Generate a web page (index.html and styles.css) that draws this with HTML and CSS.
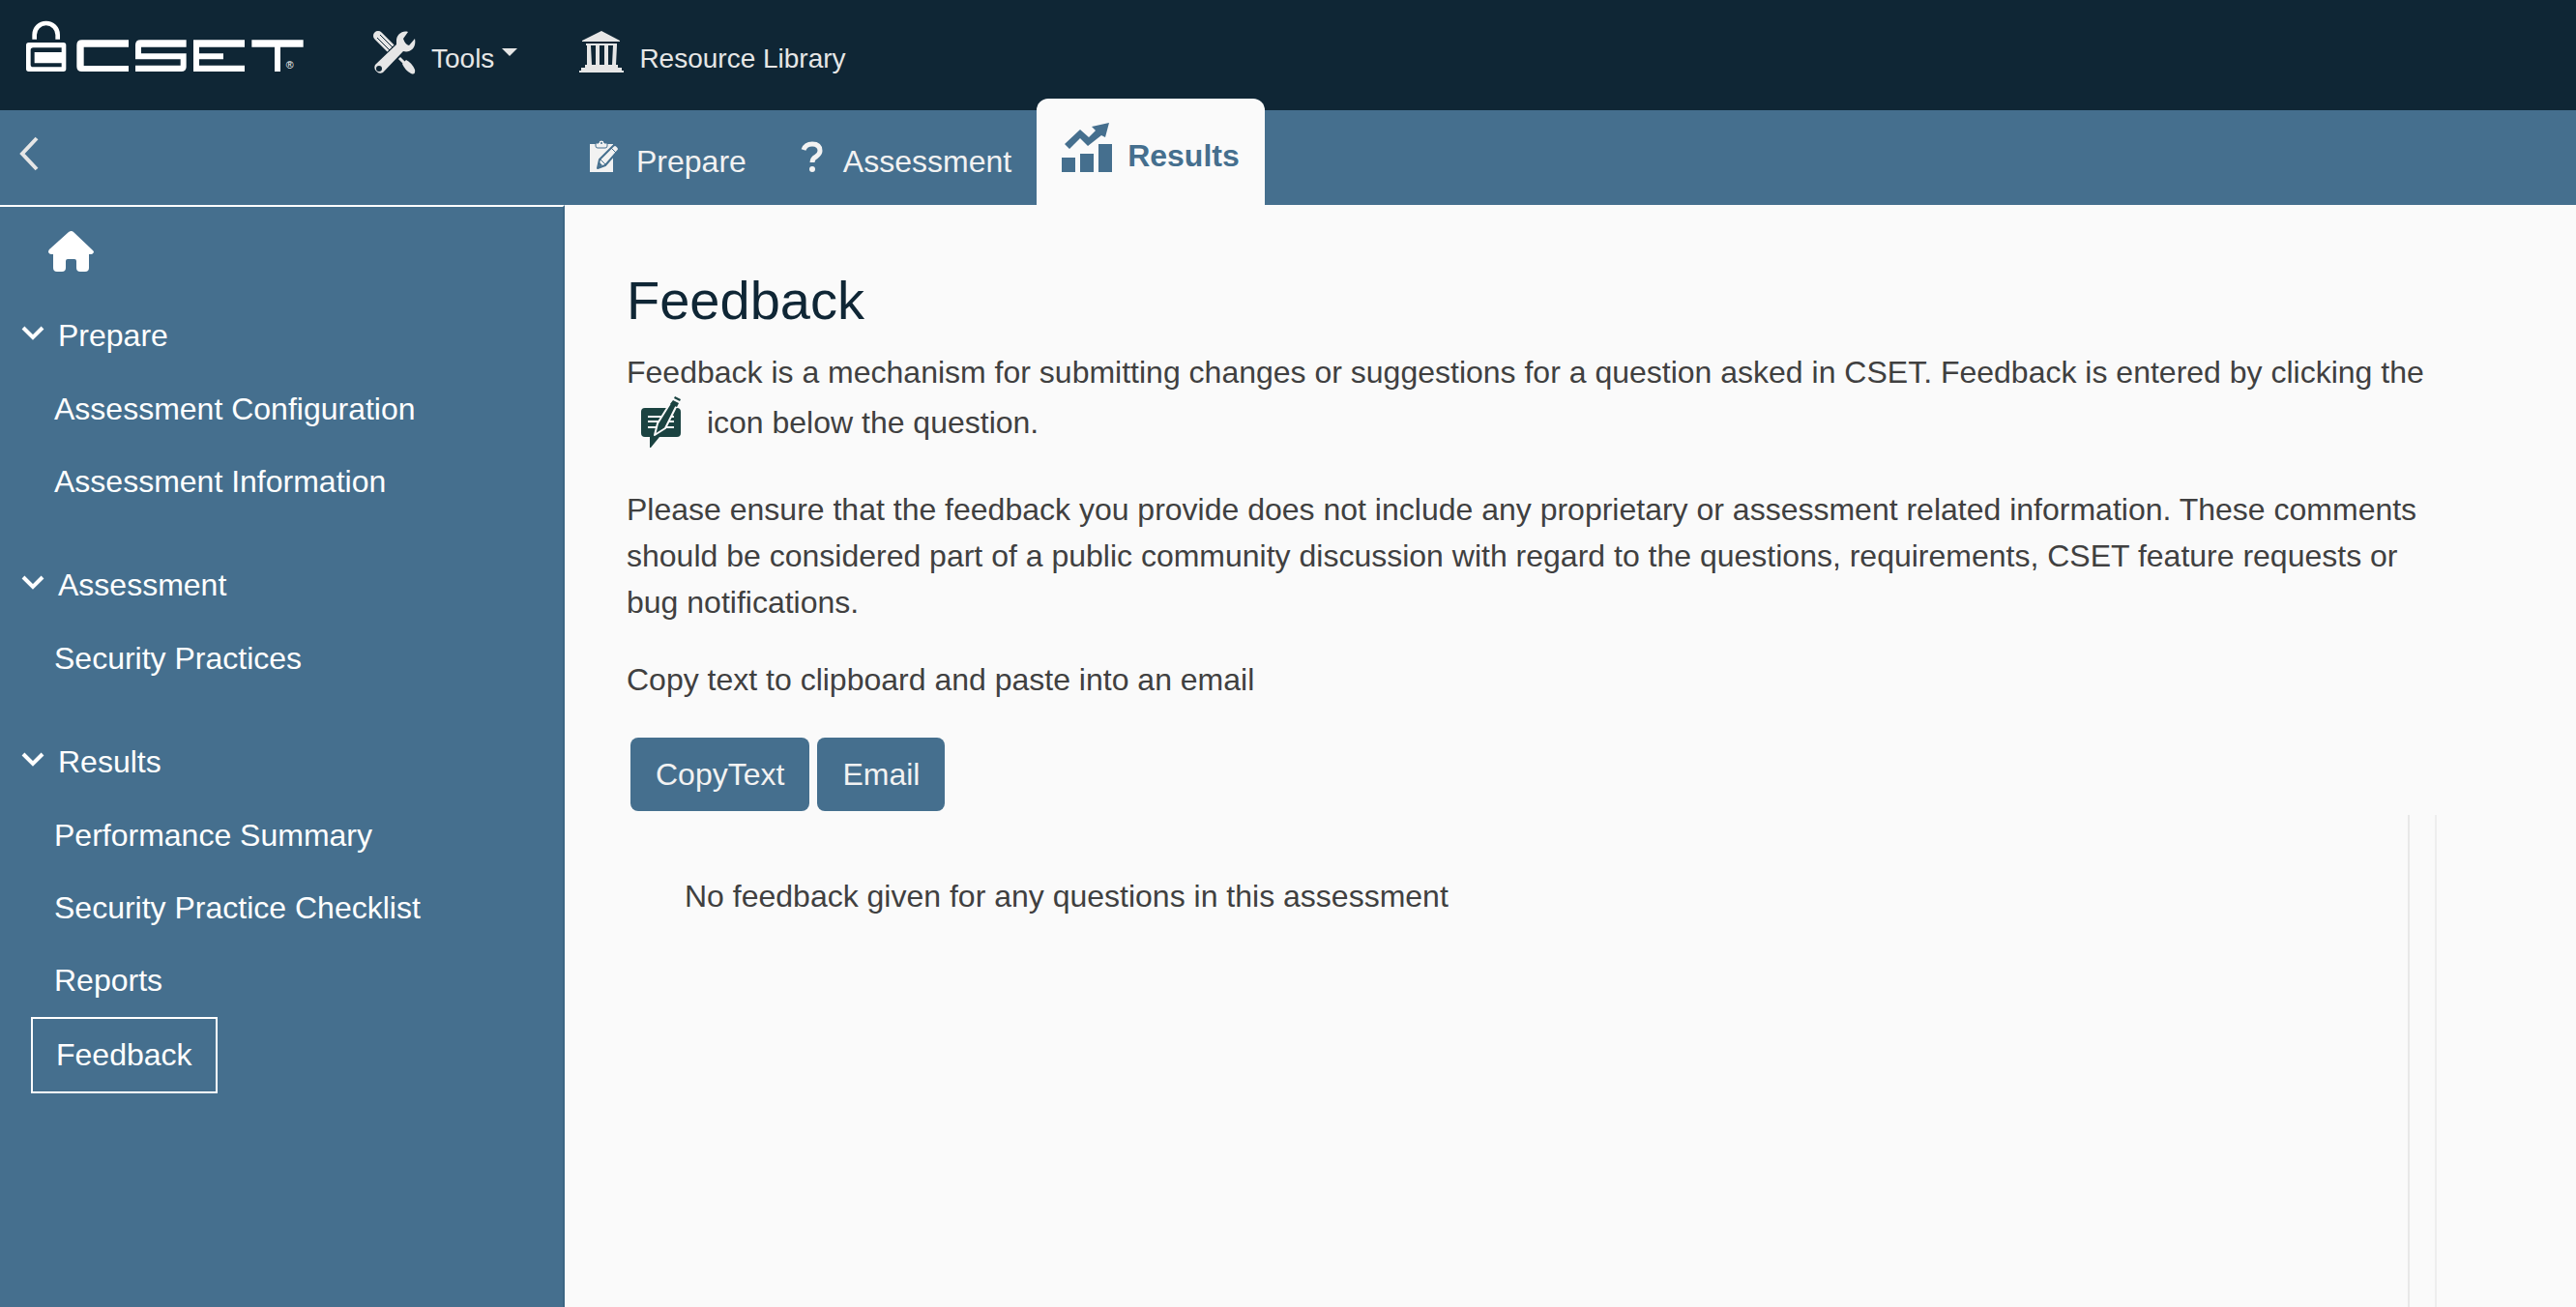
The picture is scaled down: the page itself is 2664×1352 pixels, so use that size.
FILE: index.html
```html
<!DOCTYPE html>
<html lang="en">
<head>
<meta charset="utf-8">
<title>CSET - Feedback</title>
<link rel="stylesheet" href="styles.css">
</head>
<body>
<header class="topbar">
  <a class="logo" href="#" aria-label="CSET home">
    <svg viewBox="81 60 861 165" width="287" height="55" fill="#fff">
      <path d="M107 122V108a36 36 0 0 1 72 0v14" fill="none" stroke="#fff" stroke-width="14"/>
      <path fill-rule="evenodd" d="M89 132H197Q205 132 205 140V214Q205 222 197 222H89Q81 222 81 214V140Q81 132 89 132ZM103 148Q95 148 95 156V200Q95 208 103 208H191V196H107V162H191V148Z"/>
      <path d="M399 124H254Q238 124 238 140V206Q238 222 254 222H399V204H260V146H399Z"/>
      <path d="M578 124H436Q420 124 420 140V184H560V203H420V222H562Q578 222 578 208V166H438V146H578Z"/>
      <path d="M600 124H759V146H618V166H693V184H618V203H759V222H600Z"/>
      <path d="M781 124H941V146H870V222H852V146H781Z"/>
      <text class="logo-mark" x="887" y="212">®</text>
    </svg>
  </a>
  <nav class="menu">
    <button class="menu-item" type="button">
      <svg viewBox="0 0 44 45" width="44" height="45">
        <path d="M27 28L32 33" stroke="#e6e6e6" stroke-width="3"/>
        <path d="M30 34L34 30Q40 33 43 40Q44 46 39 44Q33 41 30 34Z" fill="#e6e6e6"/>
        <path d="M5 5L19 19" stroke="#e6e6e6" stroke-width="10" stroke-linecap="round"/>
        <path d="M4 7L18 21M7 4L21 18" stroke="#0f2635" stroke-width="1"/>
        <path d="M15 24L24 15" stroke="#0f2635" stroke-width="4"/>
        <path fill="#e6e6e6" fill-rule="evenodd" d="M36 1C30-1 24 4 24 10Q24 13 24 14L2 35A6 6 0 0 0 10 43L31 21C38 23 45 18 43 8L37 15Q33 14 31 8ZM6 36A3 3 0 1 1 6 42A3 3 0 1 1 6 36Z"/>
      </svg>
      <span class="menu-label">Tools</span><span class="caret"></span>
    </button>
    <button class="menu-item" type="button">
      <svg viewBox="0 0 46 44" width="46" height="44" fill="#e6e6e6">
        <path d="M3 10L23 0L42 10V11H3ZM7 13H39V15H7ZM8 15H12L13 35H8ZM17 15H21V35H17ZM26 15H30V35H26ZM35 15H39L38 35H34ZM6 35H40V38H44V41H46V43H0V41H2V38H6Z"/>
        <path d="M8 15H12V35H8ZM35 15H38V35H35Z"/>
      </svg>
      <span class="menu-label">Resource Library</span>
    </button>
  </nav>
</header>

<div class="tabbar">
  <div class="tabbar-side">
    <button class="collapse" type="button" aria-label="Collapse navigation">
      <svg viewBox="0 0 20 36" width="20" height="36"><path d="M18 2L3 18L18 34" fill="none" stroke="#e6e6e6" stroke-width="4"/></svg>
    </button>
  </div>
  <nav class="tabs">
    <a class="tab" href="#">
      <svg viewBox="0 0 30 34" width="30" height="34">
        <path fill="#f2f2f2" d="M0 4H24V33H0Z"/>
        <path fill="#f2f2f2" stroke="#456f8e" stroke-width="1" d="M6 3H9A3 3 0 0 1 15 3H18V6Q18 8 16 8H8Q6 8 6 6Z"/>
        <circle cx="12" cy="3" r="1" fill="#456f8e"/>
        <path fill="#f2f2f2" stroke="#456f8e" stroke-width="2" stroke-linejoin="round" d="M8 29L10 20L24 6Q26 4 28 6L29 7Q31 9 29 11L16 26Z"/>
        <path fill="none" stroke="#456f8e" stroke-width="1" d="M22 8L27 13M11 20L16 25"/>
        <path fill="#456f8e" d="M9 28L10 23L13 26Z"/>
      </svg>
      <span>Prepare</span>
    </a>
    <a class="tab" href="#">
      <svg viewBox="0 0 30 34" width="30" height="34">
        <path fill="none" stroke="#f2f2f2" stroke-width="5" d="M7 10Q9 4 16 4Q24 4 24 11Q24 14 20 17Q16 19 16 23"/>
        <circle cx="16" cy="30" r="3" fill="#f2f2f2"/>
      </svg>
      <span>Assessment</span>
    </a>
    <a class="tab tab-active" href="#" aria-current="page">
      <svg viewBox="0 0 52 52" width="52" height="52" fill="#456f8e">
        <path d="M0 36H14V51H0ZM19 32H33V51H19ZM38 22H52V51H38ZM3 22L19 7L28 15L35 8L31 4L49 0L45 15L41 13L27 24L19 16L8 27Z"/>
      </svg>
      <span>Results</span>
    </a>
  </nav>
</div>

<div class="layout">
  <nav class="sidebar">
    <a class="home" href="#" aria-label="Home">
      <svg viewBox="0 0 47 42" width="47" height="42" fill="#fff">
        <path d="M21 1Q24-1 26 1L46 20Q48 22 46 23Q46 24 44 24H42V38Q42 42 38 42H33Q29 42 29 38V31Q29 29 27 29H20Q18 29 18 31V38Q18 42 14 42H9Q5 42 5 38V24H3Q1 24 0 22Q0 20 1 19Z"/>
      </svg>
    </a>
    <section class="group">
      <button class="group-head" type="button"><svg class="chev" viewBox="0 0 24 16" width="24" height="16"><path d="M2 2L12 12L22 2"/></svg>Prepare</button>
      <a class="item" href="#">Assessment Configuration</a>
      <a class="item" href="#">Assessment Information</a>
    </section>
    <section class="group">
      <button class="group-head" type="button"><svg class="chev" viewBox="0 0 24 16" width="24" height="16"><path d="M2 2L12 12L22 2"/></svg>Assessment</button>
      <a class="item" href="#">Security Practices</a>
    </section>
    <section class="group">
      <button class="group-head" type="button"><svg class="chev" viewBox="0 0 24 16" width="24" height="16"><path d="M2 2L12 12L22 2"/></svg>Results</button>
      <a class="item" href="#">Performance Summary</a>
      <a class="item" href="#">Security Practice Checklist</a>
      <a class="item" href="#">Reports</a>
      <a class="item item-active" href="#" aria-current="page">Feedback</a>
    </section>
  </nav>

  <main class="content">
    <div class="page">
      <h1>Feedback</h1>
      <p>Feedback is a mechanism for submitting changes or suggestions for a question asked in CSET. Feedback is entered by clicking the <svg class="feedback-icon" viewBox="0 -1 60 62" width="60" height="62">
          <path fill="#1b4341" d="M12 12H45Q49 12 49 16V38Q49 42 45 42H27L18 53H17V42H12Q8 42 8 38V16Q8 12 12 12Z"/>
          <path stroke="#fafafa" stroke-width="2" d="M15 21H42M15 26H42M15 32H42"/>
          <path fill="#1b4341" stroke="#fafafa" stroke-width="2" stroke-linejoin="round" d="M22 40L25 28L40 4L46 7L33 33Z"/>
          <path fill="#1b4341" d="M42 2L43 0L49 3L48 5ZM41 4L47 7L45 11L38 8Z"/>
        </svg> icon below the question.</p>
      <p>Please ensure that the feedback you provide does not include any proprietary or assessment related information. These comments should be considered part of a public community discussion with regard to the questions, requirements, CSET feature requests or bug notifications.</p>
      <p>Copy text to clipboard and paste into an email</p>
      <div class="actions">
        <button class="btn" type="button">CopyText</button>
        <button class="btn" type="button">Email</button>
      </div>
      <div class="panel">
        <div class="panel-body">No feedback given for any questions in this assessment</div>
      </div>
    </div>
  </main>
</div>
</body>
</html>
```
FILE: styles.css
```css
* {
  box-sizing: border-box;
}

body {
  margin: 0;
  min-height: 100vh;
  display: flex;
  flex-direction: column;
  font-family: "Liberation Sans", Arial, sans-serif;
  font-size: 32px;
  line-height: 48px;
  color: #404040;
  background: #fafafa;
}

a {
  color: inherit;
  text-decoration: none;
}

button {
  margin: 0;
  padding: 0;
  border: 0;
  background: none;
  color: inherit;
  font: inherit;
  text-align: left;
  cursor: pointer;
}

svg {
  display: block;
  flex: none;
}

/* Top bar */
.topbar {
  display: flex;
  align-items: flex-start;
  gap: 72px;
  height: 114px;
  padding: 20px 27px;
  background: #0f2635;
}

.logo-mark {
  font-size: 32px;
}

.menu {
  display: flex;
  gap: 64px;
  padding-top: 11px;
}

.menu-item {
  display: flex;
  align-items: center;
  gap: 16px;
  color: #e6e6e6;
  font-size: 28px;
  line-height: 32px;
}

.menu-label {
  padding-top: 14px;
}

.caret {
  margin-left: -8px;
  border: 8px solid transparent;
  border-top-color: #e6e6e6;
  border-bottom: 0;
}

/* Tab bar */
.tabbar {
  display: flex;
  height: 98px;
  background: #456f8e;
}

.tabbar-side {
  width: 584px;
  padding: 27px 20px;
}

.tabs {
  display: flex;
  align-items: flex-end;
}

.tab {
  display: flex;
  align-items: flex-end;
  gap: 18px;
  height: 98px;
  padding: 0 26px 33px;
  color: #f2f2f2;
  line-height: 36px;
}

.tab span {
  margin-bottom: -6px;
}

.tab-active {
  gap: 16px;
  height: 110px;
  border-radius: 12px 12px 0 0;
  background: #fafafa;
  color: #456f8e;
  font-weight: bold;
}

.tab-active span {
  margin-bottom: 0;
}

/* Side navigation */
.layout {
  flex: 1;
  display: flex;
}

.sidebar {
  flex: none;
  width: 584px;
  padding-top: 25px;
  border-top: 2px solid #fff;
  border-right: 2px solid #3c6583;
  background: #456f8e;
  color: #fff;
  line-height: 47px;
}

.home {
  display: inline-block;
  margin: 0 50px 29px;
  vertical-align: top;
}

.group {
  display: flex;
  flex-direction: column;
  align-items: flex-start;
  margin-bottom: 32px;
}

.group-head {
  display: flex;
  align-items: center;
  gap: 14px;
  padding: 14px 22px 15px;
}

.chev {
  margin-bottom: 6px;
  fill: none;
  stroke: #fff;
  stroke-width: 4;
}

.item {
  margin-left: 32px;
  padding: 14px 24px;
}

.item-active {
  border: 2px solid #fff;
}

/* Page content */
.content {
  flex: 1;
  display: flex;
}

.page {
  display: flex;
  flex-direction: column;
  width: 90%;
  margin-left: 64px;
  padding-top: 67px;
}

h1 {
  margin: 0 0 18px;
  color: #0f2635;
  font-size: 56px;
  font-weight: normal;
  line-height: 64px;
}

p {
  margin: 0 0 32px;
}

.feedback-icon {
  display: inline-block;
  margin: 0 7px;
  vertical-align: middle;
}

.actions {
  display: flex;
  gap: 8px;
  padding: 4px;
}

.btn {
  height: 76px;
  padding: 0 26px;
  border-radius: 8px;
  background: #456f8e;
  color: #f2f2f2;
}

.panel {
  flex: 1;
  display: flex;
  padding-right: 26px;
  border-right: 2px solid #eee;
}

.panel-body {
  flex: 1;
  padding: 60px;
  border-right: 2px solid #e8e8e8;
}
```
